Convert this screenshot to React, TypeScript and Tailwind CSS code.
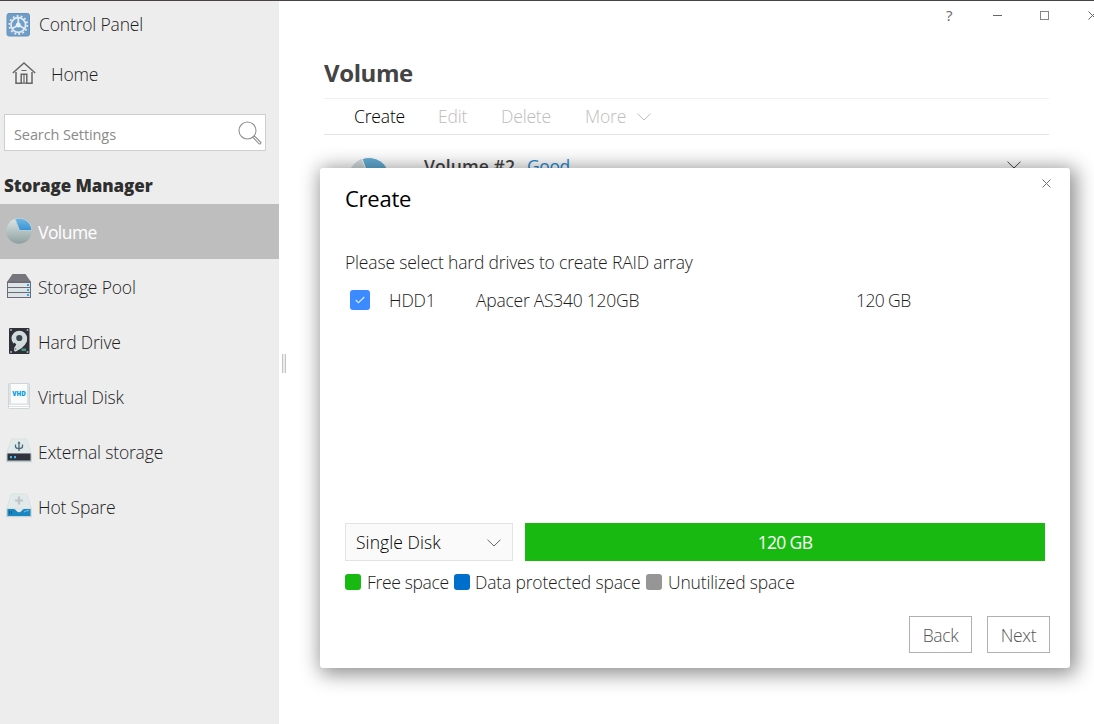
import React from 'react';

const VolumeIcon = () => (
  <svg width="26" height="26" viewBox="0 0 26 26">
    <defs>
      <linearGradient id="pieBody" x1="0" y1="0" x2="0" y2="1">
        <stop offset="0" stopColor="#dfe7e7" />
        <stop offset="1" stopColor="#8e9f9f" />
      </linearGradient>
      <linearGradient id="pieSlice" x1="0" y1="0" x2="0" y2="1">
        <stop offset="0" stopColor="#6fb9e0" />
        <stop offset="1" stopColor="#3a92d4" />
      </linearGradient>
    </defs>
    <circle cx="13" cy="13" r="12.8" fill="url(#pieBody)" />
    <path d="M13.5 12.5 L9 0.8 A12.8 12.8 0 0 1 25.8 12.5 Z" fill="url(#pieSlice)" stroke="#c3d3d8" strokeWidth="0.8" />
  </svg>
);

const PoolIcon = () => (
  <svg width="26" height="26" viewBox="0 0 26 26">
    <path d="M6.500 1h13l5.500 8H1z" fill="#77767f" />
    <path d="M1 8.500h24V25H1z" fill="#6b6b75" />
    {[10, 15, 20].map((y) => (
      <g key={y}>
        <rect x="2" y={y} width="22" height="4" fill="#dce4e8" />
        <rect x="21" y={y + 1} width="2" height="2" fill="#2fa9e0" />
      </g>
    ))}
  </svg>
);

const HardDriveIcon = () => (
  <svg width="26" height="28" viewBox="0 0 26 28">
    <rect x="3" y="1" width="20.500" height="26" rx="1" fill="#2f303a" />
    <circle cx="13.300" cy="11.500" r="7.800" fill="#d3dddd" />
    <path d="M19.500 14q-1.500 3.500-5 6l-5 3" stroke="#d3dddd" strokeWidth="3" fill="none" strokeLinecap="round" />
    <path d="M7.500 16.500 11 20" stroke="#2f303a" strokeWidth="2.500" />
    <path d="M14 14.500 9.500 21.500" stroke="#d3dddd" strokeWidth="3" strokeLinecap="round" />
    <circle cx="13.300" cy="11" r="3.100" fill="#3a4650" />
    <circle cx="9.500" cy="22" r="1" fill="#7c8a8f" />
    <rect x="15.500" y="21.500" width="4.500" height="2.500" fill="#3f9b7a" />
    {[5, 21.5].map((x) => (
      <g key={x} fill="#a9b0b5">
        <circle cx={x} cy="3" r="1" />
        <circle cx={x} cy="25" r="1" />
      </g>
    ))}
  </svg>
);

const VirtualDiskIcon = () => (
  <svg width="26" height="28" viewBox="0 0 26 28">
    <rect x="2.500" y="1.500" width="21" height="25" rx="1" fill="#dce3e5" stroke="#cdd7d9" />
    <rect x="5" y="2" width="16" height="19.500" fill="#fafcfc" />
    <path d="M3 23.500h20M3 25.500h20" stroke="#fff" strokeWidth="1" />
    <text x="13" y="13.500" textAnchor="middle" fontFamily="Open Sans, sans-serif" fontSize="6.200" fontWeight="800" letterSpacing="0" fill="#079ee8">VHD</text>
  </svg>
);

const ExternalIcon = () => (
  <svg width="26" height="26" viewBox="0 0 26 26">
    <path d="M5 1.700Q5.500.8 7 .8h12q1.500 0 2 .900L25.500 16v8h-25v-8z" fill="#e1e9e9" stroke="#d3dcdd" strokeWidth=".6" />
    <rect x=".5" y="15.500" width="25" height="8.500" fill="#bdc9cb" />
    <rect x="1.500" y="15.500" width="23" height="7" fill="#30323d" />
    <path d="M5 18v2.200M9 18v2.200" stroke="#3db9ed" strokeWidth="2" />
    <path d="M13 13V4.500M9.500 6.500v2q0 2 3.500 2.200 3.500-.200 3.500-2.200v-2" stroke="#48697b" strokeWidth="1.300" fill="none" />
    <path d="M11.400 5.500h3.200L13 3.300z" fill="#48697b" />
  </svg>
);

const HotSpareIcon = () => (
  <svg width="26" height="26" viewBox="0 0 26 26">
    <path d="M5 1.700Q5.500.8 7 .8h12q1.500 0 2 .900L25.500 16v8h-25v-8z" fill="#e1e9e9" stroke="#d3dcdd" strokeWidth=".6" />
    <path d="M.5 15.500h25V24H.5z" fill="#cad5d7" />
    <path d="M1.500 16h6q2 0 3 2 2.500 2.500 5 0 1-2 3-2h6v7h-23z" fill="#1b87c2" />
    <path d="M8 15.500q2 .5 3 2.500 2 2 4 0 1-2 3-2.500z" fill="#e1e9e9" />
    <path d="M13 3.500v8M9 7.500h8" stroke="#c0c5c8" strokeWidth="2.200" />
    <path d="M3.500 18v3M5.500 18v3" stroke="#155f8e" />
    <path d="M18 19q2-1.500 5-1.500" stroke="#7cc3e6" fill="none" />
  </svg>
);

const ControlPanelIcon = () => (
  <svg width="24" height="24" viewBox="0 0 24 24">
    <rect x="1" y=".5" width="22.500" height="22.500" rx="2" fill="#6f9dc5" stroke="#6593bd" />
    <circle cx="12.300" cy="12" r="9" fill="none" stroke="#dfeaf4" strokeWidth="1.800" strokeDasharray="1.900 2.140" />
    <circle cx="12.300" cy="12" r="7.300" fill="none" stroke="#dfeaf4" strokeWidth="1.800" />
    <path d="M12.300 12V5M12.300 12l-6 3.500M12.300 12l6 3.500" stroke="#dfeaf4" strokeWidth="1.800" />
    <circle cx="12.300" cy="12" r="2.500" fill="#e6f0f8" />
  </svg>
);

const HomeIcon = () => (
  <svg width="24" height="24" viewBox="0 0 24 24" fill="none" stroke="#666" strokeWidth="1.500">
    <path d="M.8 11 12 1l11.200 10M4 10v11.200h5.200v-9h5.600v9H20V10" />
    <path d="M9.500 8.500h5M12 13v8M9 21.200h6" strokeWidth="1.200" />
  </svg>
);

const SearchIcon = () => (
  <svg width="24" height="24" viewBox="0 0 24 24" fill="none" stroke="#929292" strokeWidth="1.100">
    <circle cx="9.500" cy="9.500" r="8.500" />
    <path d="M15 16.500l1.500-1.500 6 6q.8.800 0 1.600t-1.600 0z" />
  </svg>
);

const Chevron = ({ className }: { className: string }) => (
  <svg width="14" height="8" viewBox="0 0 14 8" fill="none" stroke="currentColor" className={className}>
    <path d="M.5.7 7 7 13.500.7" />
  </svg>
);

const Cross = ({ className }: { className: string }) => (
  <svg width="9" height="9" viewBox="0 0 9 9" fill="none" stroke="currentColor" className={className}>
    <path d="M.5.5l8 8M8.500.5l-8 8" />
  </svg>
);

const navItems = [
  { label: 'Volume', icon: <VolumeIcon />, active: true },
  { label: 'Storage Pool', icon: <PoolIcon /> },
  { label: 'Hard Drive', icon: <HardDriveIcon /> },
  { label: 'Virtual Disk', icon: <VirtualDiskIcon /> },
  { label: 'External storage', icon: <ExternalIcon /> },
  { label: 'Hot Spare', icon: <HotSpareIcon /> },
];

const Sidebar = () => (
  <aside className="w-[279px] shrink-0 bg-[#ededed]">
    <div className="flex items-center h-[47px] pl-[6px] gap-[9px]">
      <ControlPanelIcon />
      <span>Control Panel</span>
    </div>
    <div className="flex items-center h-[51px] pl-3 gap-[15px]">
      <HomeIcon />
      <span className="pt-px">Home</span>
    </div>
    {/* Search */}
    <div className="flex items-center justify-between mt-[15px] ml-1 w-[262px] h-[37px] border border-[#cfcfcf] bg-white pl-[9px] pr-[3px]">
      <span className="text-[14.5px] font-normal tracking-[-0.1px] text-[#8a8a8a] pt-1">Search Settings</span>
      <SearchIcon />
    </div>
    <h2 className="h-[53px] pt-[18px] pl-1 text-[17px] leading-[34px] font-extrabold tracking-[-0.1px] text-[#2f2f2f]">
      Storage Manager
    </h2>
    <nav>
      {navItems.map((item) => (
        <div
          key={item.label}
          className={
            item.active
              ? 'flex items-center h-[55px] pl-[6px] gap-[6px] bg-[#bebebe] text-white font-normal tracking-[-0.55px]'
              : 'flex items-center h-[55px] pl-[6px] gap-[6px]'
          }
        >
          <span className="-mt-0.5">{item.icon}</span>
          <span className="pt-0.5">{item.label}</span>
        </div>
      ))}
    </nav>
  </aside>
);

const CreateDialog = () => (
  <div className="absolute left-[320px] top-[168px] flex flex-col w-[750px] h-[500px] rounded-[3px] bg-white pl-[25px] shadow-[3px_3px_20px_3px_rgba(0,0,0,0.45)]">
    <div className="flex justify-between pr-[19px]">
      <h3 className="pt-[13px] text-[22px] leading-[34px] font-normal tracking-[-0.25px] text-black">Create</h3>
      <Cross className="mt-[11px] text-[#707070]" />
    </div>
    <p className="mt-[34px] leading-[26px]">Please select hard drives to create RAID array</p>
    {/* Drive row */}
    <div className="flex items-center mt-[12px] h-[26px] pl-[5px]">
      <span className="flex items-center justify-center size-5 -mt-px rounded-[3px] bg-[#3c8aff]">
        <svg width="10" height="8" viewBox="0 0 10 8" fill="none" stroke="#d9e8ff" strokeWidth="1.200">
          <path d="M.7 4 3.500 6.700 9.300 1" />
        </svg>
      </span>
      <span className="ml-[19px] w-[87px]">HDD1</span>
      <span className="w-[380px] tracking-[-0.25px]">Apacer AS340 120GB</span>
      <span className="tracking-[-0.6px]">120 GB</span>
    </div>
    {/* RAID level and capacity */}
    <div className="flex mt-auto gap-3">
      <div className="flex items-center justify-between w-[168px] h-[38px] border border-[#e3e3e3] bg-[#fafafa] pl-[10px] pr-[11px] text-black">
        <span className="pt-px tracking-[0.07px]">Single Disk</span>
        <Chevron className="mt-0.5 text-[#666]" />
      </div>
      <div className="flex items-center justify-center w-[520px] h-[38px] bg-[#18b910] pt-px text-white font-normal tracking-[-0.65px]">120 GB</div>
    </div>
    <div className="flex items-center mt-2 h-[26px]">
      <span className="size-4 mr-[6px] rounded-[3px] bg-[#18b910]" />
      <span className="w-[87px] tracking-[-0.35px]">Free space</span>
      <span className="size-4 mr-[5px] rounded-[3px] bg-[#006ecb]" />
      <span className="w-[171px]">Data protected space</span>
      <span className="size-4 mr-[6px] rounded-[3px] bg-[#969696]" />
      <span>Unutilized space</span>
    </div>
    <div className="flex justify-end mt-[21px] mb-[15px] pr-5 gap-[15px] tracking-[-0.35px] text-[#555]">
      <button className="w-[63px] h-[37px] border border-[#b0b0b0] pt-px">Back</button>
      <button className="w-[63px] h-[37px] border border-[#b0b0b0] pt-px">Next</button>
    </div>
  </div>
);

const App = () => {
  return (
    <div className="relative w-[1094px] h-[724px] overflow-hidden bg-white font-['Open_Sans',sans-serif] text-[17.5px] font-light tracking-[-0.17px] text-[#1c1c1c] whitespace-nowrap">
      <div className="h-px bg-[#494247]" />
      <div className="flex h-[723px]">
        <Sidebar />
        <main className="flex-1 min-w-0">
          {/* Window controls */}
          <div className="flex items-center h-7 pl-[667px] text-[#666]">
            <span className="w-[47px] shrink-0 text-[15px] font-normal">?</span>
            <span className="w-[9px] shrink-0 h-px bg-[#666] mr-[38px]" />
            <span className="size-[9px] shrink-0 border border-[#858585] mr-[38px]" />
            <Cross className="ml-px shrink-0" />
          </div>
          <div className="ml-[45px] w-[725px]">
            <h1 className="h-[69px] pt-[27px] text-[24px] leading-[34px] font-bold tracking-[-0.4px] text-[#444]">Volume</h1>
            <div className="flex items-center h-[37px] border-y border-t-[#f0f0f0] border-b-[#e3e3e3] pl-[30px] text-[#bdbdbd]">
              <span className="w-[84px] text-black">Create</span>
              <span className="w-[63px]">Edit</span>
              <span className="w-[84px]">Delete</span>
              <span className="w-[52px]">More</span>
              <Chevron className="" />
            </div>
            <div className="flex pl-6 pt-[18px]">
              <svg width="42" height="42" viewBox="0 0 42 42" className="mt-1">
                <circle cx="21" cy="21" r="20.500" fill="#d4dde0" />
                <path d="M21 21 14 1.700A20.500 20.500 0 0 1 41.500 21z" fill="#62add5" stroke="#fff" />
              </svg>
              <span className="ml-[34px] w-[103px] font-semibold tracking-[0.1px] text-[#444]">Volume #2</span>
              <span className="w-[480px] font-normal tracking-[-0.4px] text-[#198ad6]">Good</span>
              <Chevron className="mt-2 text-[#444]" />
            </div>
          </div>
        </main>
      </div>
      {/* Splitter handle */}
      <div className="absolute left-[282px] top-[354px] w-1 h-[19px] border-x border-[#c4c4c4] bg-[#ececec]" />
      <CreateDialog />
    </div>
  );
};

export default App;
